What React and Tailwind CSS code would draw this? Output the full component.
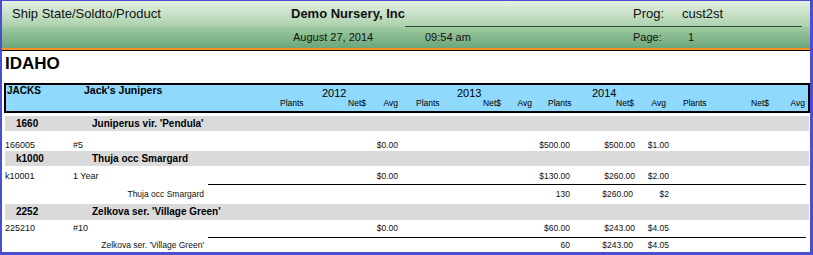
import React from "react";

const font = { fontFamily: '"Liberation Sans", Arial, sans-serif' };

function GrayRow({ code, name }) {
  return (
    <div className="ml-[3px] mr-[1px] h-[15px] bg-[#dadada] flex items-center text-[10px] font-bold leading-[12px] text-black">
      <span className="pl-[11px] w-[87px] shrink-0">{code}</span>
      <span className="whitespace-nowrap">{name}</span>
    </div>
  );
}

function DetailRow({ id, desc, v1, v2, v3, v4, h, align }) {
  return (
    <div className={`flex ${align} ${h} text-[9px] leading-[11px] text-[#111] whitespace-nowrap`}>
      <div className="w-[396px] shrink-0 flex">
        <span className="pl-[3px] w-[71px] shrink-0">{id}</span>
        <span>{desc}</span>
        <span className="ml-auto text-[8.5px]">{v1}</span>
      </div>
      <span className="w-[172px] shrink-0 text-right text-[8.5px]">{v2}</span>
      <span className="w-[65px] shrink-0 text-right text-[8.5px]">{v3}</span>
      <span className="w-[34px] shrink-0 text-right text-[8.5px]">{v4}</span>
    </div>
  );
}

function SubRow({ label, plants, net, avg, h, extra }) {
  return (
    <div className={`flex items-center ${h} ${extra} text-[8.5px] leading-[11px] text-[#111] whitespace-nowrap`}>
      <span className="w-[202px] shrink-0 text-right">{label}</span>
      <span className="w-[366px] shrink-0 text-right">{plants}</span>
      <span className="w-[63px] shrink-0 text-right">{net}</span>
      <span className="w-[36px] shrink-0 text-right">{avg}</span>
    </div>
  );
}

function Rule() {
  return <div className="ml-[206px] w-[598px] h-px bg-black" />;
}

export default function App() {
  return (
    <div
      className="w-[813px] h-[255px] overflow-hidden bg-white border-t border-l-2 border-r-[3px] border-b-[3px] border-[#4a4fd1] flex flex-col"
      style={font}
    >
      {/* Header band 1 */}
      <div className="h-[26px] shrink-0 flex flex-col bg-gradient-to-b from-[#e4f0e4] to-[#a9d1ab]">
        <div className="h-[25px] flex items-center text-[13px] leading-[15px] text-[#111] whitespace-nowrap">
          <span className="pl-[10px] w-[289px] shrink-0">Ship State/Soldto/Product</span>
          <span className="w-[342px] shrink-0 font-bold">Demo Nursery, Inc</span>
          <span className="w-[49px] shrink-0">Prog:</span>
          <span>cust2st</span>
        </div>
        <div className="ml-[403px] w-[397px] h-px bg-[#3d4a3d]" />
      </div>
      {/* Header band 2 */}
      <div className="h-[21px] shrink-0 flex items-center bg-gradient-to-b from-[#9ecb9f] to-[#6ba67a] text-[11px] leading-[13px] text-[#111] whitespace-nowrap">
        <span className="pl-[291px] w-[423px] shrink-0">August 27, 2014</span>
        <span className="w-[208px] shrink-0">09:54 am</span>
        <span className="w-[55px] shrink-0">Page:</span>
        <span>1</span>
      </div>
      <div className="h-[2px] shrink-0 bg-[#f7901e]" />
      <div className="h-px shrink-0 bg-black" />

      {/* State */}
      <div className="mt-[3px] h-[20px] pl-[3px] text-[17px] leading-[20px] font-bold text-black shrink-0">IDAHO</div>

      {/* Customer header box */}
      <div className="mt-[9px] ml-[2px] h-[30px] shrink-0 border-2 border-black bg-[#8fd9fc] text-black whitespace-nowrap">
        <div className="flex h-[13px] items-start">
          <span className="pl-[1px] w-[78px] shrink-0 text-[10px] font-bold leading-[11px]">JACKS</span>
          <span className="w-[238px] shrink-0 text-[10.5px] font-bold leading-[11px]">Jack's Junipers</span>
          <span className="w-[135px] shrink-0 text-[11px] leading-[12px] mt-[2px]">2012</span>
          <span className="w-[135px] shrink-0 text-[11px] leading-[12px] mt-[2px]">2013</span>
          <span className="text-[11px] leading-[12px] mt-[2px]">2014</span>
        </div>
        <div className="flex h-[10px] text-[8.5px] leading-[10px]">
          <span className="w-[274px] shrink-0" />
          <span className="w-[23px] shrink-0">Plants</span>
          <span className="w-[63px] shrink-0 text-right">Net$</span>
          <span className="w-[32px] shrink-0 text-right">Avg</span>
          <span className="w-[41px] shrink-0 pl-[18px]">Plants</span>
          <span className="w-[62px] shrink-0 text-right">Net$</span>
          <span className="w-[31px] shrink-0 text-right">Avg</span>
          <span className="w-[40px] shrink-0 pl-[16px]">Plants</span>
          <span className="w-[62px] shrink-0 text-right">Net$</span>
          <span className="w-[32px] shrink-0 text-right">Avg</span>
          <span className="w-[40px] shrink-0 pl-[17px]">Plants</span>
          <span className="w-[63px] shrink-0 text-right">Net$</span>
          <span className="w-[36px] shrink-0 text-right">Avg</span>
        </div>
      </div>

      <div className="mt-[3px] shrink-0 flex flex-col">
        <GrayRow code="1660" name="Juniperus vir. 'Pendula'" />
        <DetailRow id="166005" desc="#5" v1="$0.00" v2="$500.00" v3="$500.00" v4="$1.00" h="h-[20px]" align="items-end" />
        <GrayRow code="k1000" name="Thuja occ Smargard" />
        <DetailRow id="k10001" desc="1 Year" v1="$0.00" v2="$130.00" v3="$260.00" v4="$2.00" h="h-[18px] pt-[2px]" align="items-center" />
        <Rule />
        <SubRow label="Thuja occ Smargard" plants="130" net="$260.00" avg="$2" h="h-[19px]" extra="" />
        <div className="ml-[3px] mr-[1px] h-[16px] bg-[#dadada] flex items-center text-[10px] font-bold leading-[12px] text-black">
          <span className="pl-[11px] w-[87px] shrink-0">2252</span>
          <span className="whitespace-nowrap">Zelkova ser. 'Village Green'</span>
        </div>
        <DetailRow id="225210" desc="#10" v1="$0.00" v2="$60.00" v3="$243.00" v4="$4.05" h="h-[17px]" align="items-center" />
        <Rule />
        <SubRow label="Zelkova ser. 'Village Green'" plants="60" net="$243.00" avg="$4.05" h="h-[14px]" extra="pt-[1px]" />
      </div>
    </div>
  );
}
